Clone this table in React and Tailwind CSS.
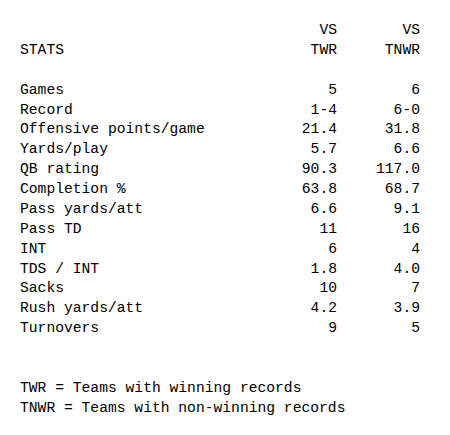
import React from "react";

const rows = [
  ["Games", "5", "6"],
  ["Record", "1-4", "6-0"],
  ["Offensive points/game", "21.4", "31.8"],
  ["Yards/play", "5.7", "6.6"],
  ["QB rating", "90.3", "117.0"],
  ["Completion %", "63.8", "68.7"],
  ["Pass yards/att", "6.6", "9.1"],
  ["Pass TD", "11", "16"],
  ["INT", "6", "4"],
  ["TDS / INT", "1.8", "4.0"],
  ["Sacks", "10", "7"],
  ["Rush yards/att", "4.2", "3.9"],
  ["Turnovers", "9", "5"],
];

export default function App() {
  return (
    <div
      className="w-[450px] h-[435px] bg-white text-black pt-[21px] pl-[20px] text-[14.67px] leading-[19.875px] whitespace-pre"
      style={{ fontFamily: '"Liberation Mono", "Courier New", monospace' }}
    >
      <div className="grid grid-cols-[234px_83px_83px]">
        <div></div>
        <div className="text-right">VS</div>
        <div className="text-right">VS</div>
        <div>STATS</div>
        <div className="text-right">TWR</div>
        <div className="text-right">TNWR</div>
        <div className="col-span-3">&nbsp;</div>
        {rows.map(([label, a, b]) => (
          <React.Fragment key={label}>
            <div>{label}</div>
            <div className="text-right">{a}</div>
            <div className="text-right">{b}</div>
          </React.Fragment>
        ))}
      </div>
      <div>&nbsp;</div>
      <div>&nbsp;</div>
      <div>TWR = Teams with winning records</div>
      <div>TNWR = Teams with non-winning records</div>
    </div>
  );
}
